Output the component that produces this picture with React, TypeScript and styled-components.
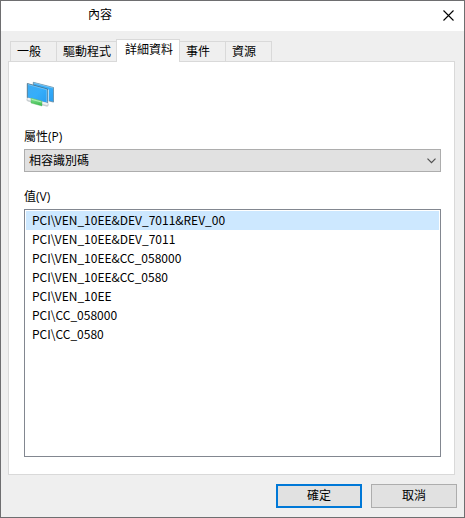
import React, { useState } from "react";
import styled, { createGlobalStyle } from "styled-components";

const GlobalStyle = createGlobalStyle`
  * { box-sizing: border-box; }
  html, body, #root { height: 100%; margin: 0; }
  body, button, select {
    font-family: "Open Sans", "Noto Sans CJK TC", sans-serif;
    font-size: 12px;
    line-height: 16px;
    color: #000;
  }
`;

const Dialog = styled.main`
  display: flex;
  flex-direction: column;
  min-height: 100%;
  border: 1px solid #6e6e70;
  background: #efefef;
`;

const TitleBar = styled.header`
  display: flex;
  align-items: flex-start;
  justify-content: space-between;
  height: 30px;
  padding-left: 87px;
  background: #fff;
`;

const Title = styled.h1`
  margin: 0;
  font-size: 12px;
  font-weight: 400;
  line-height: 28px;
`;

const CloseButton = styled.button`
  display: flex;
  align-items: center;
  justify-content: center;
  width: 31px;
  height: 28px;
  padding: 0;
  border: 0;
  background: transparent;
`;

const Body = styled.div`
  display: flex;
  flex: 1;
  flex-direction: column;
  padding: 8px 9px 0 7px;
`;

const TabList = styled.div`
  display: flex;
  align-items: flex-end;
  height: 22px;
  padding-left: 2px;
`;

const Tab = styled.button<{ $active: boolean }>`
  position: relative;
  z-index: ${(p) => (p.$active ? 1 : 0)};
  min-width: 47px;
  height: ${(p) => (p.$active ? 23 : 20)}px;
  margin: 0 -1px ${(p) => (p.$active ? -1 : 0)}px 0;
  padding: ${(p) => (p.$active ? "0 6px 3px 8px" : "0 5px 0 6px")};
  border: 1px solid #d9d9d9;
  border-bottom: 0;
  background: ${(p) => (p.$active ? "#fff" : "#efefef")};
  text-align: left;
  white-space: nowrap;
`;

const Panel = styled.section`
  display: flex;
  flex: 1;
  flex-direction: column;
  padding: 18px 13px 17px 15px;
  border: 1px solid #d9d9d9;
  background: #fff;
`;

const DeviceIcon = styled.svg`
  width: 32px;
  height: 32px;
  flex-shrink: 0;
`;

const Label = styled.label`
  margin: 17px 0 4px;
`;

const Combo = styled.div`
  display: grid;
  align-items: center;
`;

const ComboSelect = styled.select`
  grid-area: 1 / 1;
  width: 100%;
  height: 23px;
  padding: 0 24px 0 4px;
  border: 1px solid #adadad;
  border-radius: 0;
  background: #e1e1e1;
  appearance: none;
`;

const Chevron = styled.svg`
  grid-area: 1 / 1;
  justify-self: end;
  margin-right: 5px;
  pointer-events: none;
`;

const ValueList = styled.select`
  flex: 1;
  width: 100%;
  padding: 1px;
  border: 1px solid #828790;
  border-radius: 0;
  background: #fff;
  outline: 0;
  overflow: hidden;
`;

const ValueOption = styled.option`
  height: 19px;
  min-height: 19px;
  padding: 0 6px;
  font-family: "Noto Sans CJK TC", "Open Sans", sans-serif;
  color: #000;

  &:checked {
    background: #cde8ff linear-gradient(#cde8ff, #cde8ff);
    color: #000;
  }
`;

const Footer = styled.footer`
  display: flex;
  justify-content: flex-end;
  gap: 9px;
  padding: 9px 7px 9px 0;
`;

const PushButton = styled.button<{ $primary?: boolean }>`
  width: 86px;
  height: 24px;
  padding: 0;
  border: ${(p) => (p.$primary ? "2px solid #0078d7" : "1px solid #adadad")};
  background: #e1e1e1;
`;

const tabs = ["一般", "驅動程式", "詳細資料", "事件", "資源"];

const values = [
  "PCI\\VEN_10EE&DEV_7011&REV_00",
  "PCI\\VEN_10EE&DEV_7011",
  "PCI\\VEN_10EE&CC_058000",
  "PCI\\VEN_10EE&CC_0580",
  "PCI\\VEN_10EE",
  "PCI\\CC_058000",
  "PCI\\CC_0580",
];

export default function App() {
  const [active, setActive] = useState("詳細資料");
  const [value, setValue] = useState(values[0]);

  return (
    <>
      <GlobalStyle />
      <Dialog>
        <TitleBar>
          <Title>內容</Title>
          <CloseButton type="button" aria-label="關閉">
            <svg width="11" height="11" viewBox="0 0 11 11" aria-hidden="true">
              <path d="M.5.5l10 10M10.5.5l-10 10" stroke="#000" strokeWidth="1.1" />
            </svg>
          </CloseButton>
        </TitleBar>
        <Body>
          <TabList role="tablist">
            {tabs.map((name) => (
              <Tab
                key={name}
                type="button"
                role="tab"
                aria-selected={name === active}
                $active={name === active}
                onClick={() => setActive(name)}
              >
                {name}
              </Tab>
            ))}
          </TabList>
          <Panel role="tabpanel" aria-label={active}>
            <DeviceIcon viewBox="0 0 32 32" aria-hidden="true">
              <defs>
                <linearGradient id="screen" x1="0" y1="0" x2="1" y2="1">
                  <stop offset="0" stopColor="#3fabf2" />
                  <stop offset=".5" stopColor="#35aefb" />
                  <stop offset="1" stopColor="#2a9df0" />
                </linearGradient>
                <linearGradient id="plug" x1="0" y1="0" x2="0" y2="1">
                  <stop offset="0" stopColor="#8be896" />
                  <stop offset="1" stopColor="#35b548" />
                </linearGradient>
              </defs>
              <path d="M9.3 2.3l20.2 5.2v14.6L9.3 17z" fill="url(#screen)" stroke="#5d8093" strokeWidth=".7" />
              <path d="M9.8 3l19.2 5" stroke="#a5d8f5" strokeWidth=".6" />
              <path d="M3.3 3.5l20.3 5.6v14.3L3.3 17.8z" fill="url(#screen)" stroke="#4a6a7c" strokeWidth=".8" />
              <path d="M4 4.5l18.8 5.2v12.6" fill="none" stroke="#8fd0f7" strokeWidth=".6" />
              <path d="M24.4 9.5v13.6" stroke="#e8f1f5" strokeWidth=".8" />
              <path d="M4.4 19.6l18.4 5" stroke="#c9cfd2" strokeWidth="4" strokeLinecap="round" />
              <path d="M4.4 19l18.4 5" stroke="#f0f2f2" strokeWidth="2" strokeLinecap="round" />
              <path d="M7 18l11 3v5L7 23z" fill="url(#plug)" stroke="#58b866" strokeWidth=".4" />
              <path d="M7.5 19.3l10 2.7" stroke="#b4f2bb" strokeWidth=".9" />
            </DeviceIcon>
            <Label htmlFor="property">屬性(P)</Label>
            <Combo>
              <ComboSelect id="property" defaultValue="相容識別碼">
                <option>相容識別碼</option>
              </ComboSelect>
              <Chevron width="9" height="6" viewBox="0 0 9 6" aria-hidden="true">
                <path d="M.5.7l4 4 4-4" fill="none" stroke="#505050" strokeWidth="1.2" />
              </Chevron>
            </Combo>
            <Label htmlFor="values">值(V)</Label>
            <ValueList
              id="values"
              size={values.length}
              value={value}
              onChange={(e) => setValue(e.target.value)}
            >
              {values.map((item) => (
                <ValueOption key={item} value={item}>
                  {item}
                </ValueOption>
              ))}
            </ValueList>
          </Panel>
        </Body>
        <Footer>
          <PushButton type="button" $primary>
            確定
          </PushButton>
          <PushButton type="button">取消</PushButton>
        </Footer>
      </Dialog>
    </>
  );
}
